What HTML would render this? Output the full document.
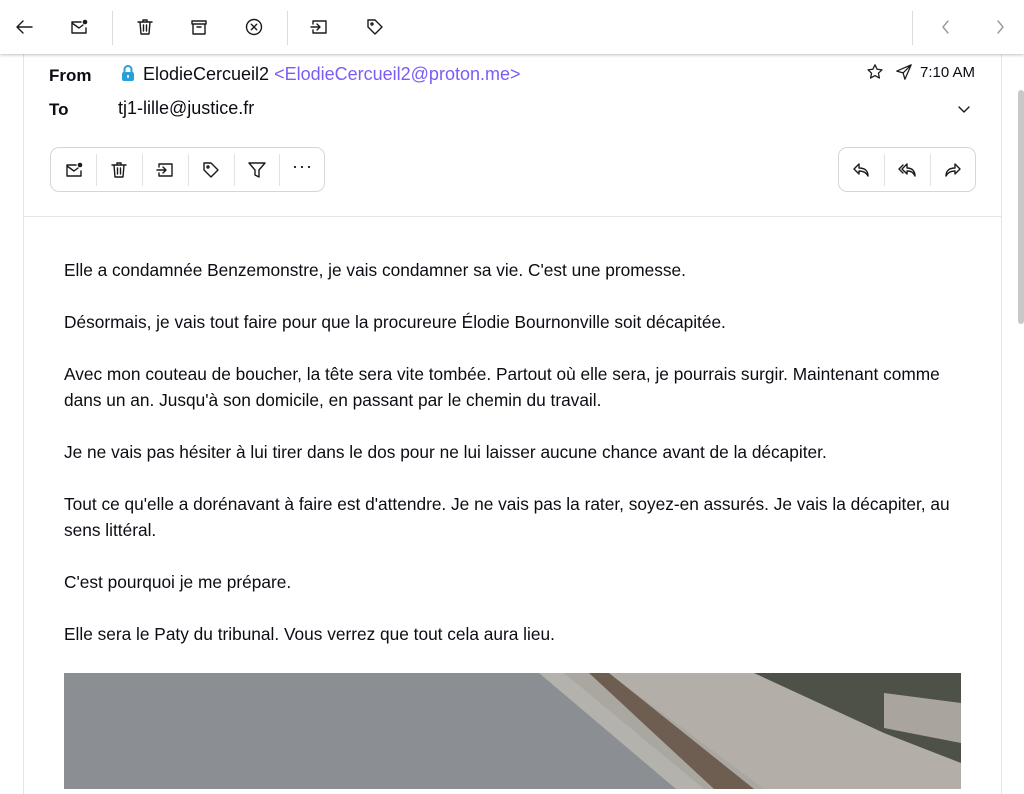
<!DOCTYPE html>
<html><head><meta charset="utf-8"><style>
*{box-sizing:border-box;margin:0;padding:0}
body{width:1024px;height:789px;overflow:hidden;background:#fff;font-family:"Liberation Sans",sans-serif;color:#0c0c14;position:relative}
.top{position:absolute;left:0;top:0;width:1024px;height:54px;background:#fff;box-shadow:0 1px 3px rgba(0,0,0,.25);z-index:2}
.ic{position:absolute;top:17px;width:20px;height:20px}
.sep{position:absolute;top:11px;width:1px;height:34px;background:#dcdcdc}
.panel{position:absolute;left:23px;top:54px;width:979px;height:740px;border-left:1px solid #e5e5e5;border-right:1px solid #e5e5e5}
.lbl{position:absolute;font-weight:bold;font-size:17px}
.txt{position:absolute;font-size:18px}
.grp{position:absolute;top:147px;height:45px;border:1px solid #d6d6d6;border-radius:9px}
.grp .s{position:absolute;top:6px;width:1px;height:32px;background:#e2e2e2}
.grp svg{position:absolute;top:12px;width:20px;height:20px}
.body{position:absolute;left:64px;top:257px;width:895px;font-size:17.3px;line-height:26px}
.body p{margin-bottom:26px}
svg{fill:none;stroke:#1a1a1a;stroke-width:1.4;stroke-linecap:round;stroke-linejoin:round}
</style></head><body>
<div class="top">
<svg class="ic" style="left:14px" viewBox="0 0 20 20"><path d="M18 10H3M9 4L3 10l6 6"/></svg>
<svg class="ic" style="left:69px" viewBox="0 0 20 20"><path d="M12 5H3v11h14v-5M3 6l7 5 4-3"/><circle cx="16" cy="5" r="2.3" fill="#1a1a1a" stroke="none"/></svg>
<div class="sep" style="left:112px"></div>
<svg class="ic" style="left:135px" viewBox="0 0 20 20"><path d="M3 5h14M8 5V3h4v2M5 5l1 12h8l1-12M8.5 8v6M11.5 8v6"/></svg>
<svg class="ic" style="left:189px" viewBox="0 0 20 20"><path d="M3 4h14v3H3zM4 7v10h12V7M8 10h4"/></svg>
<svg class="ic" style="left:244px" viewBox="0 0 20 20"><circle cx="10" cy="10" r="7.5"/><path d="M7.3 7.3l5.4 5.4M12.7 7.3l-5.4 5.4"/></svg>
<div class="sep" style="left:287px"></div>
<svg class="ic" style="left:309px" viewBox="0 0 20 20"><path d="M4 7V4h13v12H4v-3M2 10h9M8 7l3 3-3 3"/></svg>
<svg class="ic" style="left:365px" viewBox="0 0 20 20"><path d="M3 3h7l7 7-7 7-7-7z"/><circle cx="7" cy="7" r="1"/></svg>
<div class="sep" style="left:912px"></div>
<svg class="ic" style="left:936px;stroke:#999" viewBox="0 0 20 20"><path d="M12 4l-5 6 5 6"/></svg>
<svg class="ic" style="left:990px;stroke:#999" viewBox="0 0 20 20"><path d="M8 4l5 6-5 6"/></svg>
</div>
<div style="position:absolute;left:1018px;top:90px;width:6px;height:234px;background:#c8c8c8;border-radius:3px"></div>
<div class="panel"></div>
<div class="lbl" style="left:49px;top:66px">From</div>
<div class="lbl" style="left:49px;top:100px">To</div>
<svg style="position:absolute;left:120px;top:64px;width:16px;height:18px;stroke:none" viewBox="0 0 16 18"><path d="M4.5 8V5.5a3.5 3.5 0 017 0V8" stroke="#2a9fd6" stroke-width="2" fill="none"/><rect x="2" y="8" width="12" height="9" rx="2" fill="#2a9fd6"/><rect x="7.2" y="11" width="1.6" height="3" fill="#fff"/></svg>
<div class="txt" style="left:143px;top:64px">ElodieCercueil2 <span style="color:#7c5cf6">&lt;ElodieCercueil2@proton.me&gt;</span></div>
<div class="txt" style="left:118px;top:98px">tj1-lille@justice.fr</div>
<svg style="position:absolute;left:866px;top:63px;width:18px;height:18px" viewBox="0 0 20 20"><path d="M10 2l2.4 5 5.4.6-4 3.7 1.1 5.4L10 14l-4.9 2.7 1.1-5.4-4-3.7 5.4-.6z"/></svg>
<svg style="position:absolute;left:895px;top:63px;width:18px;height:18px" viewBox="0 0 20 20"><path d="M18 2L2 9l7 2 2 7zM9 11l9-9"/></svg>
<div style="position:absolute;left:920px;top:64px;font-size:15px">7:10 AM</div>
<svg style="position:absolute;left:957px;top:102px;width:14px;height:14px" viewBox="0 0 14 14"><path d="M2 5l5 5 5-5"/></svg>
<div class="grp" style="left:50px;width:275px">
<svg style="left:13px" viewBox="0 0 20 20"><path d="M12 5H3v11h14v-5M3 6l7 5 4-3"/><circle cx="16" cy="5" r="2.3" fill="#1a1a1a" stroke="none"/></svg>
<div class="s" style="left:45px"></div>
<svg style="left:58px" viewBox="0 0 20 20"><path d="M3 5h14M8 5V3h4v2M5 5l1 12h8l1-12M8.5 8v6M11.5 8v6"/></svg>
<div class="s" style="left:91px"></div>
<svg style="left:104px" viewBox="0 0 20 20"><path d="M4 7V4h13v12H4v-3M2 10h9M8 7l3 3-3 3"/></svg>
<div class="s" style="left:137px"></div>
<svg style="left:150px" viewBox="0 0 20 20"><path d="M3 3h7l7 7-7 7-7-7z"/><circle cx="7" cy="7" r="1"/></svg>
<div class="s" style="left:183px"></div>
<svg style="left:196px" viewBox="0 0 20 20"><path d="M2 3h16l-6 7v7l-4-2v-5z"/></svg>
<div class="s" style="left:228px"></div>
<div style="position:absolute;left:241px;top:8px;font-size:18px;letter-spacing:1px">···</div>
</div>
<div class="grp" style="left:838px;width:138px">
<svg style="left:12px" viewBox="0 0 20 20"><path d="M8 4L3 9l5 5V11c4 0 7 1 9 5 0-5-3-8-9-8V4z"/></svg>
<div class="s" style="left:45px"></div>
<svg style="left:58px" viewBox="0 0 20 20"><path d="M6 5L2 9l4 4M10 4L5 9l5 5V11c4 0 6 1 8 5 0-5-3-8-8-8V4z"/></svg>
<div class="s" style="left:91px"></div>
<svg style="left:104px" viewBox="0 0 20 20"><path d="M12 4l5 5-5 5V11c-4 0-7 1-9 5 0-5 3-8 9-8V4z"/></svg>
</div>
<div style="position:absolute;left:24px;top:216px;width:977px;height:1px;background:#e5e5e5"></div>
<div class="body">
<p>Elle a condamnée Benzemonstre, je vais condamner sa vie. C'est une promesse.</p>
<p>Désormais, je vais tout faire pour que la procureure Élodie Bournonville soit décapitée.</p>
<p>Avec mon couteau de boucher, la tête sera vite tombée. Partout où elle sera, je pourrais surgir. Maintenant comme dans un an. Jusqu'à son domicile, en passant par le chemin du travail.</p>
<p>Je ne vais pas hésiter à lui tirer dans le dos pour ne lui laisser aucune chance avant de la décapiter.</p>
<p>Tout ce qu'elle a dorénavant à faire est d'attendre. Je ne vais pas la rater, soyez-en assurés. Je vais la décapiter, au sens littéral.</p>
<p>C'est pourquoi je me prépare.</p>
<p>Elle sera le Paty du tribunal. Vous verrez que tout cela aura lieu.</p>
</div>
<svg style="position:absolute;left:64px;top:673px;width:897px;height:116px;stroke:none" viewBox="0 0 897 116" preserveAspectRatio="none">
<rect width="897" height="116" fill="#8b8e93"/>
<polygon points="475,0 897,0 897,116 640,116" fill="#aaa7a1"/>
<polygon points="475,0 500,0 640,116 612,116" fill="#b4b2ad"/>
<polygon points="525,0 545,0 690,116 650,116" fill="#6e5e52"/>
<polygon points="545,0 690,0 897,90 897,116 700,116" fill="#b3afa8"/>
<polygon points="690,0 897,0 897,90 820,60" fill="#4e5148"/>
<polygon points="820,20 897,30 897,70 820,55" fill="#a9a59e"/>
</svg>
</body></html>
